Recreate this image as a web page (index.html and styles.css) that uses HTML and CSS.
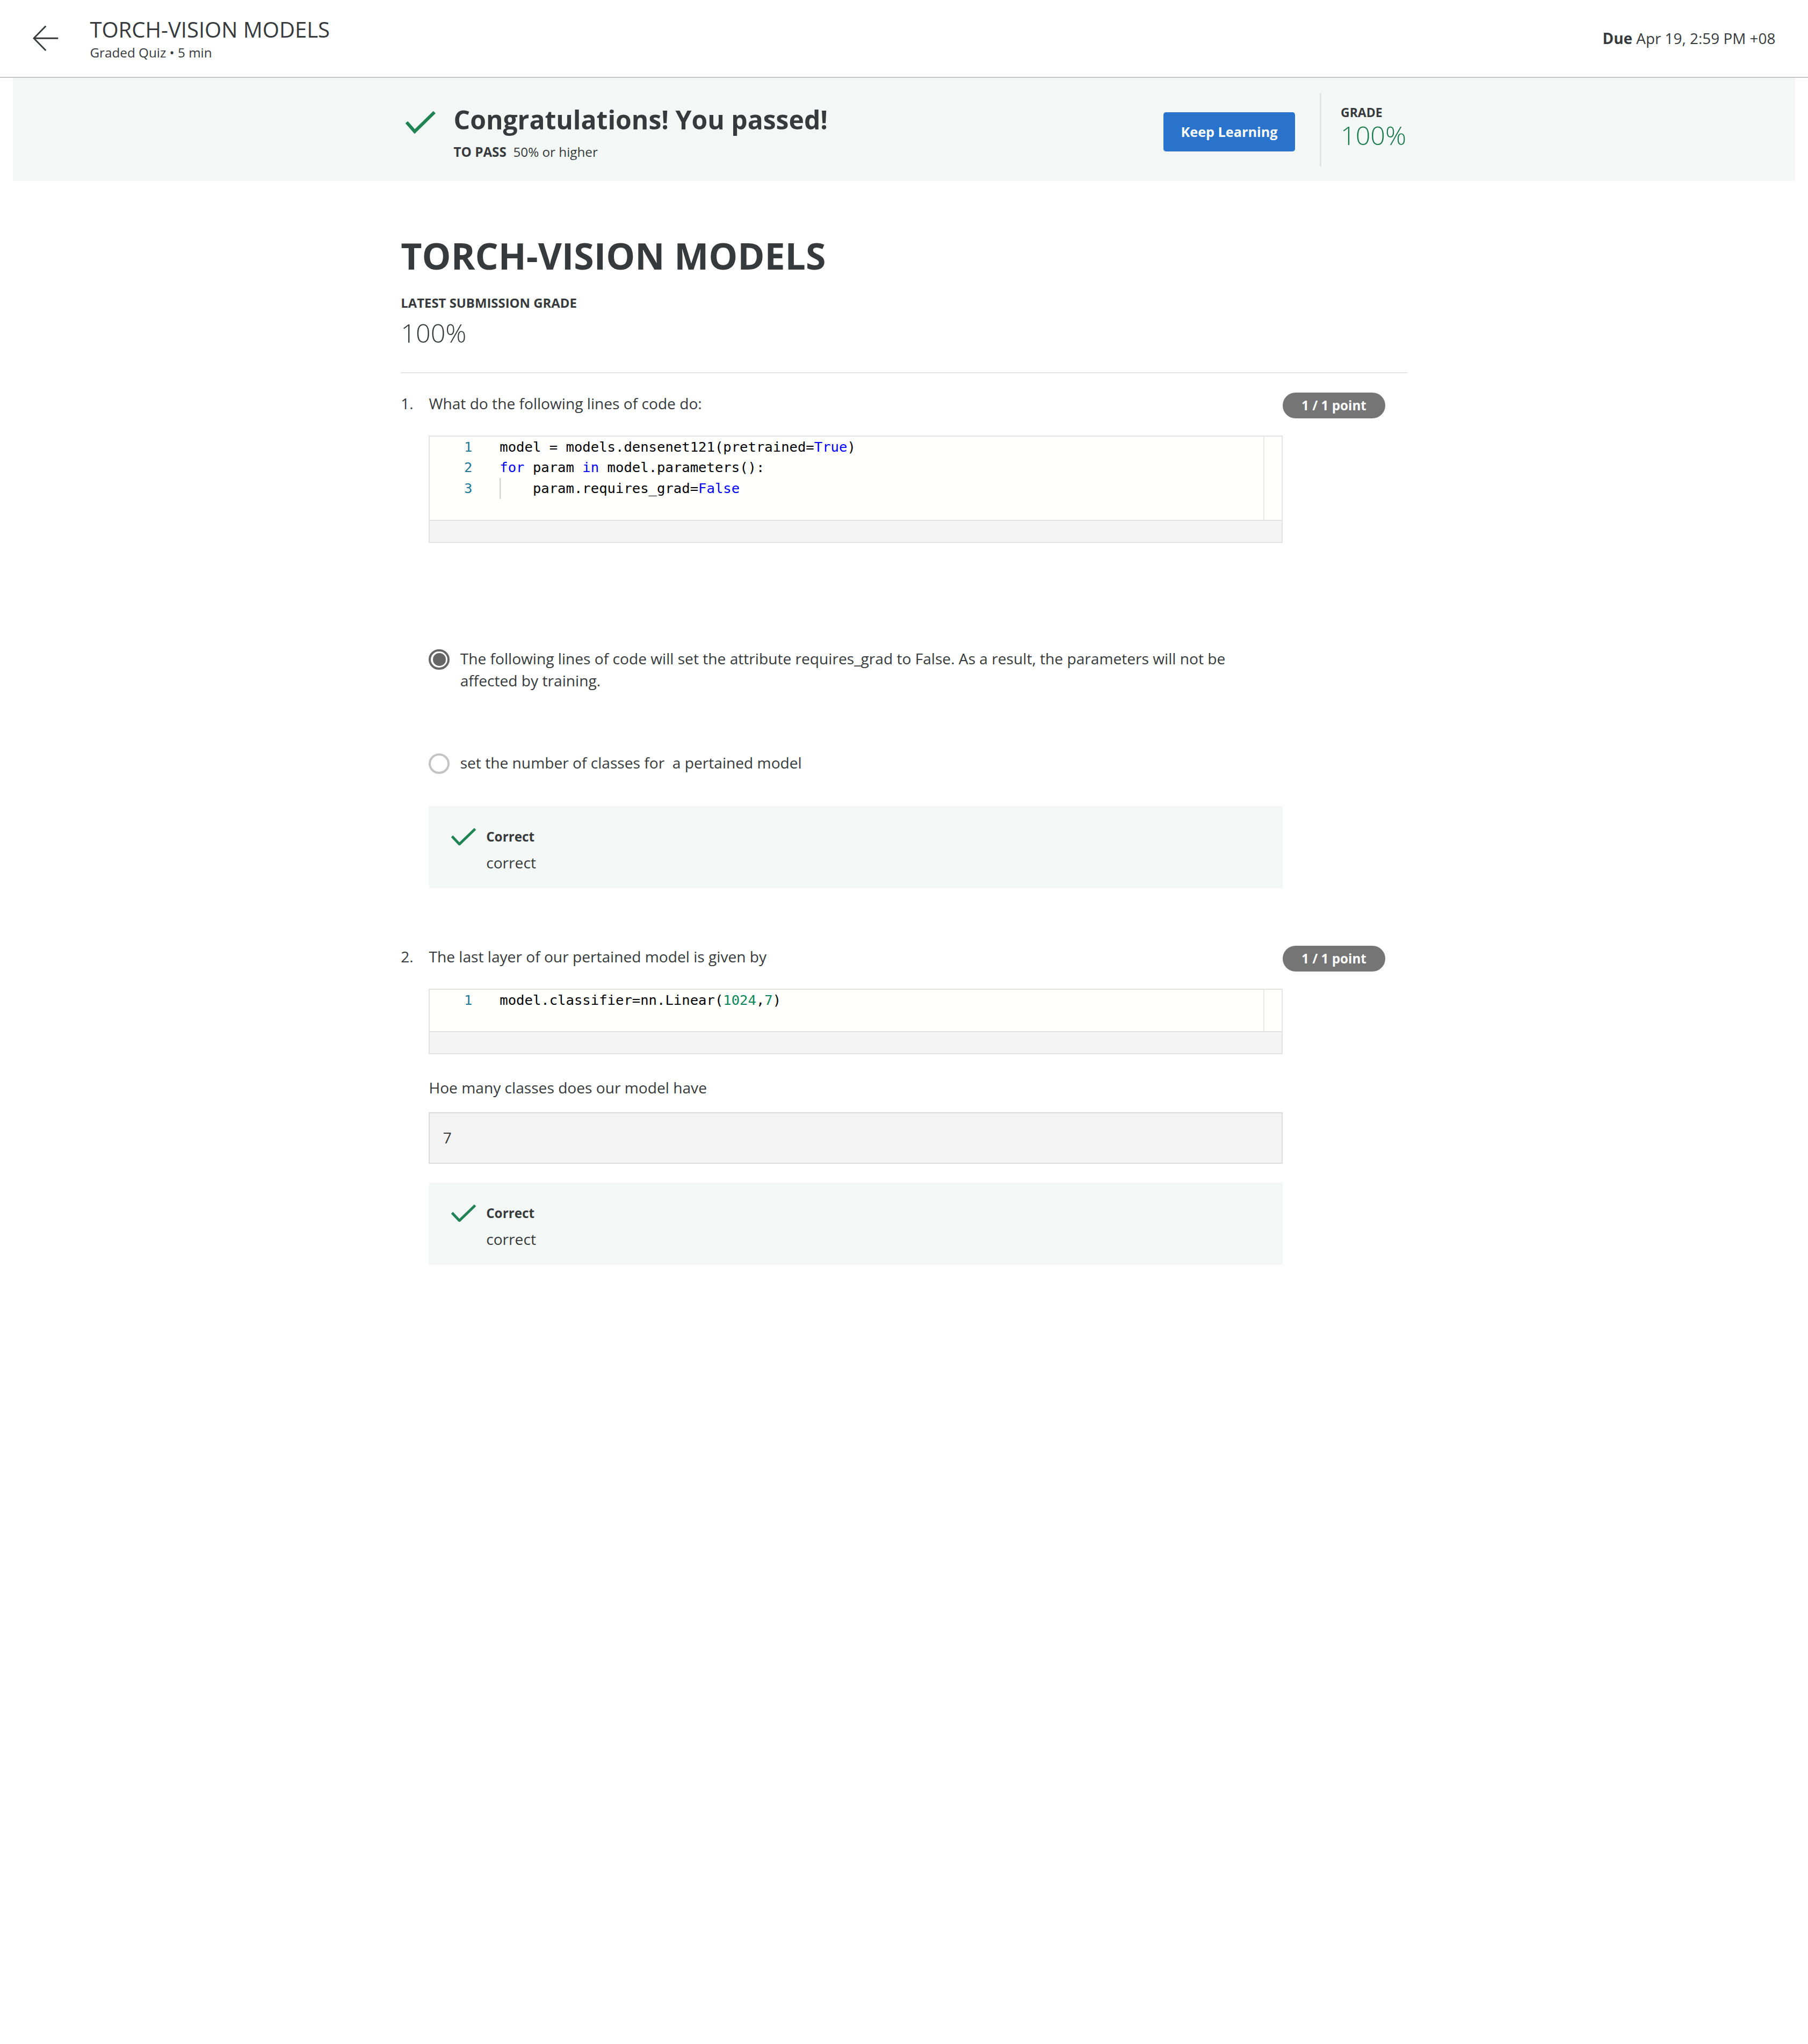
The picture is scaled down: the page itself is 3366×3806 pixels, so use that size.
FILE: index.html
```html
<!DOCTYPE html>
<html lang="en">
<head>
<meta charset="utf-8">
<title>TORCH-VISION MODELS</title>
<link rel="stylesheet" href="styles.css">
</head>
<body>
<header class="topbar">
  <a class="back" aria-label="Back">
    <svg viewBox="0 0 20 20" width="20" height="20"><path d="M19.5 10H0.8M10 0.6L0.8 10L10 19.4" fill="none" stroke="#373a3c" stroke-width="1.2"/></svg>
  </a>
  <div class="topbar-title">
    <div class="item-name">TORCH-VISION MODELS</div>
    <div class="item-meta">Graded Quiz • 5 min</div>
  </div>
  <div class="due"><strong>Due</strong> Apr 19, 2:59 PM +08</div>
</header>

<section class="banner">
  <div class="banner-inner">
    <div class="pass">
      <svg class="pass-check" viewBox="0 0 23 17"><polyline points="0.8,8.5 7,15.6 22.2,0.8" fill="none" stroke="#1f8354" stroke-width="2.5"/></svg>
      <div class="pass-text">
        <h2>Congratulations! You passed!</h2>
        <p><strong>TO PASS</strong>&nbsp; 50% or higher</p>
      </div>
    </div>
    <button class="btn-primary">Keep Learning</button>
    <div class="divider"></div>
    <div class="grade">
      <div class="grade-label">GRADE</div>
      <div class="grade-value">100%</div>
    </div>
  </div>
</section>

<main class="content">
  <h1>TORCH-VISION MODELS</h1>
  <div class="sub-label">LATEST SUBMISSION GRADE</div>
  <div class="latest">100%</div>
  <hr class="rule">

  <div class="question">
    <div class="q-num">1.</div>
    <div class="q-body">
      <p class="q-text">What do the following lines of code do:</p>
      <div class="editor">
        <div class="editor-area">
          <div class="gutter"><div>1</div><div>2</div><div>3</div></div>
          <div class="code"><div>model = models.densenet121(pretrained=<span class="kw">True</span>)</div><div><span class="kw">for</span> param <span class="kw">in</span> model.parameters():</div><div><span class="indent">    </span>param.requires_grad=<span class="kw">False</span></div></div>
          <div class="ruler"></div>
        </div>
        <div class="editor-foot"></div>
      </div>
      <div class="options">
        <div class="option">
          <span class="radio checked"></span>
          <div class="option-text">The following lines of code will set the attribute requires_grad to False. As a result, the parameters will not be affected by training.</div>
        </div>
        <div class="option">
          <span class="radio"></span>
          <div class="option-text">set the number of classes for&nbsp; a pertained model</div>
        </div>
      </div>
      <div class="feedback">
        <div class="fb-head">
          <svg class="fb-check" viewBox="0 0 19 13"><polyline points="0.6,6.3 6.3,12.3 18.4,0.6" fill="none" stroke="#1f8354" stroke-width="2"/></svg>
          <span class="fb-title">Correct</span>
        </div>
        <div class="fb-text">correct</div>
      </div>
    </div>
    <div class="q-points"><span class="badge">1 / 1 point</span></div>
  </div>

  <div class="question">
    <div class="q-num">2.</div>
    <div class="q-body">
      <p class="q-text">The last layer of our pertained model is given by</p>
      <div class="editor">
        <div class="editor-area">
          <div class="gutter"><div>1</div></div>
          <div class="code"><div>model.classifier=nn.Linear(<span class="num">1024</span>,<span class="num">7</span>)</div></div>
          <div class="ruler"></div>
        </div>
        <div class="editor-foot"></div>
      </div>
      <p class="prompt">Hoe many classes does our model have</p>
      <div class="answer">7</div>
      <div class="feedback">
        <div class="fb-head">
          <svg class="fb-check" viewBox="0 0 19 13"><polyline points="0.6,6.3 6.3,12.3 18.4,0.6" fill="none" stroke="#1f8354" stroke-width="2"/></svg>
          <span class="fb-title">Correct</span>
        </div>
        <div class="fb-text">correct</div>
      </div>
    </div>
    <div class="q-points"><span class="badge">1 / 1 point</span></div>
  </div>
</main>
</body>
</html>
```

FILE: styles.css
```css
html {
  zoom: 2.4268;
}

body {
  margin: 0;
  background: #ffffff;
  color: #373a3c;
  font-family: "Open Sans", "Liberation Sans", sans-serif;
}

/* ---------- top bar ---------- */
.topbar {
  display: flex;
  align-items: center;
  height: 59px;
  padding: 0 25px;
  border-bottom: 1px solid #c4c4c4;
}

.back {
  display: flex;
  width: 20px;
  height: 20px;
  margin-right: 24px;
}

.topbar-title {
  flex: 1;
}

.item-name {
  font-size: 16.5px;
  line-height: 22px;
}

.item-meta {
  font-size: 10px;
  line-height: 14px;
}

.due {
  font-size: 11.5px;
  line-height: 16px;
}

.due strong {
  font-weight: 700;
}

/* ---------- pass banner ---------- */
.banner {
  height: 79px;
  margin: 0 10px;
  background: #f3f8f6;
}

.banner-inner {
  display: flex;
  align-items: flex-start;
  box-sizing: border-box;
  width: 772px;
  height: 100%;
  margin: 0 auto;
  padding-top: 20px;
}

.pass {
  display: flex;
  flex: 1;
}

.pass-check {
  flex: none;
  width: 23px;
  height: 17px;
  margin: 5.6px 0 0 3.5px;
}

.pass-text {
  margin-left: 14px;
}

.pass-text h2 {
  margin: 0;
  font-size: 19.8px;
  line-height: 24px;
  font-weight: 700;
}

.pass-text p {
  margin: 5.7px 0 0;
  font-size: 10px;
  line-height: 14px;
}

.btn-primary {
  width: 101px;
  height: 30px;
  margin-top: 6.3px;
  margin-left: 1px;
  padding: 0;
  border: 0;
  border-radius: 2px;
  background: #2a73cc;
  color: #ffffff;
  font-family: "Open Sans", "Liberation Sans", sans-serif;
  font-size: 10.4px;
  font-weight: 700;
  line-height: 30px;
}

.divider {
  width: 1px;
  height: 56px;
  margin: -8px 15px 0 19px;
  background: #e1e4e5;
}

.grade {
  width: 51px;
}

.grade-label {
  font-size: 9.5px;
  line-height: 13px;
  font-weight: 700;
}

.grade-value {
  color: #1a7a4c;
  font-size: 20px;
  line-height: 22px;
  font-weight: 300;
}

/* ---------- content ---------- */
.content {
  width: 772px;
  margin: 0 auto;
  padding-top: 39.4px;
}

.content h1 {
  margin: 0;
  font-size: 28px;
  line-height: 36px;
  font-weight: 700;
}

.sub-label {
  margin-top: 11.3px;
  font-size: 9.85px;
  line-height: 14px;
  font-weight: 700;
}

.latest {
  margin-top: 2.9px;
  font-size: 20px;
  line-height: 26px;
  font-weight: 300;
}

.rule {
  margin: 17px 0 0;
  border: 0;
  border-top: 1px solid #e5e5e5;
}

/* ---------- questions ---------- */
.question {
  display: grid;
  grid-template-columns: 21.5px 655px 78.7px;
  margin-top: 14.8px;
  font-size: 11.6px;
  line-height: 17px;
}

.question + .question {
  margin-top: 44px;
}

.q-text,
.prompt {
  margin: 0;
}

.badge {
  display: block;
  width: 78.7px;
  height: 20px;
  border-radius: 10px;
  background: #757575;
  color: #ffffff;
  font-size: 10px;
  font-weight: 700;
  line-height: 20px;
  text-align: center;
}

/* ---------- code editor ---------- */
.editor {
  margin-top: 16px;
  border: 1px solid #e3e3e3;
  background: #f4f4f4;
}

.editor-area {
  display: flex;
  padding-bottom: 16px;
  background: #fffffe;
  border-bottom: 1px solid #e3e3e3;
}

.gutter,
.code {
  font-family: "DejaVu Sans Mono", "Liberation Mono", monospace;
  font-size: 10.55px;
  line-height: 16px;
}

.gutter {
  flex: none;
  box-sizing: border-box;
  width: 53.5px;
  padding-right: 21px;
  color: #237893;
  text-align: right;
}

.code {
  flex: 1;
  color: #000000;
  white-space: pre;
}

.kw {
  color: #0000ff;
}

.num {
  color: #098658;
}

.indent {
  display: inline-block;
  height: 16px;
  vertical-align: top;
  box-shadow: inset 1px 0 0 #d3d3d3;
}

.ruler {
  flex: none;
  width: 13px;
  margin-bottom: -16px;
  border-left: 1px solid #e8e8e8;
}

.editor-foot {
  height: 16px;
}

/* ---------- options ---------- */
.options {
  margin-top: 80.5px;
}

.option {
  display: flex;
  align-items: flex-start;
}

.option + .option {
  margin-top: 46px;
}

.radio {
  position: relative;
  flex: none;
  box-sizing: border-box;
  width: 16px;
  height: 16px;
  margin-top: 1px;
  border: 2px solid #c3c3c3;
  border-radius: 50%;
}

.radio.checked {
  border-color: #666666;
}

.radio.checked::after {
  content: "";
  position: absolute;
  inset: 1.5px;
  border-radius: 50%;
  background: #666666;
}

.option-text {
  width: 600px;
  margin-left: 8px;
}

/* ---------- feedback ---------- */
.feedback {
  margin-top: 24.5px;
  padding: 16.5px 16px 11px 17px;
  background: #f3f8f6;
}

.fb-head {
  display: flex;
  align-items: center;
  height: 14px;
}

.fb-check {
  flex: none;
  width: 19px;
  height: 13px;
  margin-right: 8px;
}

.fb-title {
  font-size: 10px;
  font-weight: 700;
  line-height: 14px;
}

.fb-text {
  margin: 4.5px 0 0 27px;
}

/* ---------- text answer ---------- */
.prompt {
  margin-top: 17.4px;
}

.answer {
  box-sizing: border-box;
  height: 39.5px;
  margin-top: 10px;
  padding-left: 10px;
  border: 1px solid #dcdcdc;
  background: #f3f3f3;
  line-height: 37.5px;
}

.answer + .feedback {
  margin-top: 14.5px;
}
```
